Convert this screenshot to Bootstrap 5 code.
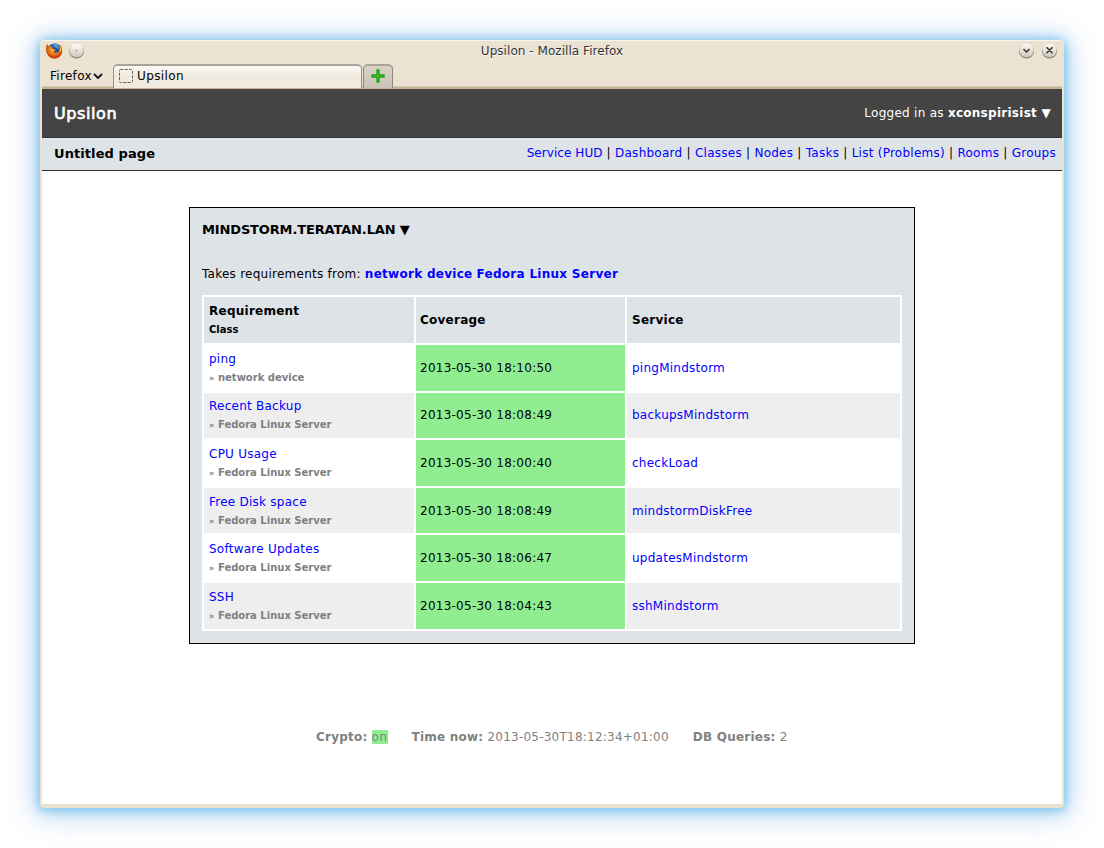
<!DOCTYPE html>
<html lang="en">
<head>
<meta charset="utf-8">
<title>Upsilon</title>
<link rel="stylesheet" href="https://cdn.jsdelivr.net/npm/bootstrap@5.3.0/dist/css/bootstrap.min.css">
<script src="https://cdn.jsdelivr.net/npm/bootstrap@5.3.0/dist/js/bootstrap.bundle.min.js"></script>
<style>
body{font:12px/16px "DejaVu Sans",sans-serif;color:#000;background:#fff;letter-spacing:.25px;overflow:hidden}
a{color:#00f;text-decoration:none}
.win{width:1024px;height:768px;margin:40px;background:#ebe2d1;border-radius:4px;padding:0 2px 4px;border-top:1px solid #f8f5ef;box-shadow:0 1px 10px 1px rgba(95,190,235,.75),0 2px 20px 3px rgba(120,190,235,.5),0 3px 34px 5px rgba(150,180,235,.3)}
.titlebar{height:23px;position:relative;color:#333;letter-spacing:.05px;padding:0 4px}
.titlebar .caption{position:absolute;left:0;right:0;top:2px;text-align:center;text-shadow:0 1px #fff}
.tabs{height:25px;border-bottom:2px solid #c9b48d;box-shadow:inset 0 -1px #cfc7ba;letter-spacing:0}
.menu-ff{width:71px;padding:4px 0 0 8px;letter-spacing:.3px}
.tab-on{width:249px;height:24px;background:linear-gradient(#fbf9f5,#f1eadf 45%);border:1px solid #958f84;border-top:2px solid #aaa397;border-bottom:0;border-radius:5px 5px 0 0;padding:0 5px 2px;letter-spacing:.4px}
.tab-new{width:30px;height:24px;margin-left:1px;background:linear-gradient(#d9d2c7,#cbc3b6);border:1px solid #8b857b;border-top:2px solid #aaa397;border-bottom:0;border-radius:5px 5px 0 0;padding:2px 6px}
.page{height:715px;background:#fff}
.head{height:49px;background:#444;border-bottom:1px solid #393339;color:#fff;padding:1px 11px 0 12px}
.head h1{font-size:16px;font-weight:normal;margin:0;letter-spacing:.6px;-webkit-text-stroke:.7px #fff}
.who{letter-spacing:.27px;padding-bottom:2px}
.sub{height:33px;background:#dee3e7;border-bottom:1px solid #393339;padding:0 6px 2px 12px}
.sub h2{font-size:13px;font-weight:bold;margin:2px 0 0;letter-spacing:.08px}
.links{letter-spacing:.26px}
.links a:first-child{letter-spacing:.06px}
.panel{width:726px;height:437px;margin:36px auto 0 147px;border:1px solid #000;background:#dee3e7;padding:14px 12px 0}
.panel h3{font-size:13px;line-height:16px;font-weight:bold;margin:0 0 28px;letter-spacing:-.14px}
.from a{letter-spacing:.28px}
.reqs{width:700px;height:336px;table-layout:fixed;border-collapse:separate;border-spacing:2px;background:#fff;margin-top:13px}
.reqs td,.reqs th{padding:0 5px;vertical-align:middle}
.reqs td:nth-child(2),.reqs th:nth-child(2){padding-left:4px}
.reqs tr{height:46px}
.reqs tr.short{height:45px}
.reqs tr.up td{padding-bottom:2px}
.reqs tr.short td:first-child{padding:1px 5px 0}
.reqs tr.up td:first-child{padding:0 5px}
.reqs .grey td{background:#eee}
.reqs th{background:#dee3e7}
.reqs td.ok{background:#90ee90!important}
.sub-line{display:block;font-size:10px;line-height:14px;font-weight:bold;color:#808080;margin-top:4px;letter-spacing:0}
th .sub-line{color:#000}
.raquo{font-size:8px;letter-spacing:.3px}
.foot{margin:85px 0 0 274px;color:#808080;gap:24px;letter-spacing:.23px}
.on{background:#90ee90;letter-spacing:.5px}
</style>
</head>
<body>
<div class="win">
 <div class="titlebar d-flex">
  <svg width="40" height="20" viewBox="0 0 40 20">
   <defs><radialGradient id="fo" cx=".5" cy=".4"><stop offset=".3" stop-color="#fba324"/><stop offset="1" stop-color="#d04a0c"/></radialGradient><linearGradient id="bt" x2="0" y2="1"><stop stop-color="#fffdf8"/><stop offset="1" stop-color="#cfc7b9"/></linearGradient></defs>
   <circle cx="8.500" cy="9.500" r="7" fill="#244f91"/><path d="M6 3.500Q9 1.500 12 3.500L13 8 9.500 7Z" fill="#4a9ad6"/>
   <path d="M1 3Q-1 9 1 12.500 3 17.500 8.500 17.500 14 17.500 16 12 17 6 13.500 3 14.500 8 12.500 11 9.500 12.500 7 11L9.500 9.500 8.500 8.300 6 7.500 6 5 3 5.500Z" fill="url(#fo)"/><path d="M1 10.500Q3 15.500 9 15.500 14 14.500 15.500 9 16 16 9 17.500 2 17.500 1 10.500" fill="#d5420c"/><path d="M13.500 4Q17 8 13.500 12 14.500 8 13.500 4" fill="#ffc52e"/>
   <circle cx="30.500" cy="10" r="7.500" fill="#8d867a"/><circle cx="30.500" cy="9.300" r="7" fill="url(#bt)"/><rect x="30" y="9" width="1" height="1" fill="#555"/>
  </svg>
  <span class="caption">Upsilon - Mozilla Firefox</span>
  <svg class="ms-auto" width="40" height="20" viewBox="0 0 40 20"><circle cx="8.500" cy="10" r="7.500" fill="#8d867a"/><circle cx="8.500" cy="9.300" r="7" fill="url(#bt)"/><circle cx="31.500" cy="10" r="7.500" fill="#8d867a"/><circle cx="31.500" cy="9.300" r="7" fill="url(#bt)"/><path d="M5.500 8 8.500 11 11.500 8M28.500 6.300l6 6M34.500 6.300l-6 6" fill="none" stroke="#333" stroke-width="1.500"/></svg>
 </div>
 <div class="tabs d-flex">
  <div class="menu-ff text-nowrap">Firefox<svg width="12" height="10"><path d="M2 2 6 6 10 2" fill="none" stroke="#111" stroke-width="1.800"/></svg></div>
  <div class="tab-on d-flex align-items-center"><svg width="14" height="14"><rect x=".5" y=".5" width="13" height="13" rx="1" fill="none" stroke="#66625b" stroke-dasharray="3 1.300"/></svg><span class="ms-1">Upsilon</span></div>
  <div class="tab-new"><svg class="d-block" width="16" height="16"><path d="M7 2h2v5h5v2h-5v5h-2v-5h-5v-2h5z" fill="#5cd43e" stroke="#25a01a" stroke-linejoin="round" stroke-width="1.400"/></svg></div>
 </div>
 <div class="page">
  <header class="head d-flex justify-content-between align-items-center"><h1>Upsilon</h1><span class="who">Logged in as <b>xconspirisist ▼</b></span></header>
  <nav class="sub d-flex justify-content-between align-items-center"><h2>Untitled page</h2><div class="links"><a href="#">Service HUD</a> | <a href="#">Dashboard</a> | <a href="#">Classes</a> | <a href="#">Nodes</a> | <a href="#">Tasks</a> | <a href="#">List (Problems)</a> | <a href="#">Rooms</a> | <a href="#">Groups</a></div></nav>
  <main class="panel">
   <h3>MINDSTORM.TERATAN.LAN ▼</h3>
   <div class="from">Takes requirements from: <a class="fw-bold" href="#">network device</a> <a class="fw-bold" href="#">Fedora Linux Server</a></div>
   <table class="reqs">
    <colgroup><col style="width:210px"><col style="width:209px"><col></colgroup>
    <tr><th>Requirement<span class="sub-line">Class</span></th><th>Coverage</th><th>Service</th></tr>
    <tr><td><a href="#">ping</a><span class="sub-line"><span class="raquo">»</span> network device</span></td><td class="ok">2013-05-30 18:10:50</td><td><a href="#">pingMindstorm</a></td></tr>
    <tr class="grey short up"><td><a href="#">Recent Backup</a><span class="sub-line"><span class="raquo">»</span> Fedora Linux Server</span></td><td class="ok">2013-05-30 18:08:49</td><td><a href="#">backupsMindstorm</a></td></tr>
    <tr><td><a href="#">CPU Usage</a><span class="sub-line"><span class="raquo">»</span> Fedora Linux Server</span></td><td class="ok">2013-05-30 18:00:40</td><td><a href="#">checkLoad</a></td></tr>
    <tr class="grey short"><td><a href="#">Free Disk space</a><span class="sub-line"><span class="raquo">»</span> Fedora Linux Server</span></td><td class="ok">2013-05-30 18:08:49</td><td><a href="#">mindstormDiskFree</a></td></tr>
    <tr><td><a href="#">Software Updates</a><span class="sub-line"><span class="raquo">»</span> Fedora Linux Server</span></td><td class="ok">2013-05-30 18:06:47</td><td><a href="#">updatesMindstorm</a></td></tr>
    <tr class="grey"><td><a href="#">SSH</a><span class="sub-line"><span class="raquo">»</span> Fedora Linux Server</span></td><td class="ok">2013-05-30 18:04:43</td><td><a href="#">sshMindstorm</a></td></tr>
   </table>
  </main>
  <footer class="foot d-flex"><span><b>Crypto:</b> <span class="on">on</span></span><span><b>Time now:</b> 2013-05-30T18:12:34+01:00</span><span><b>DB Queries:</b> 2</span></footer>
 </div>
</div>
</body>
</html>
